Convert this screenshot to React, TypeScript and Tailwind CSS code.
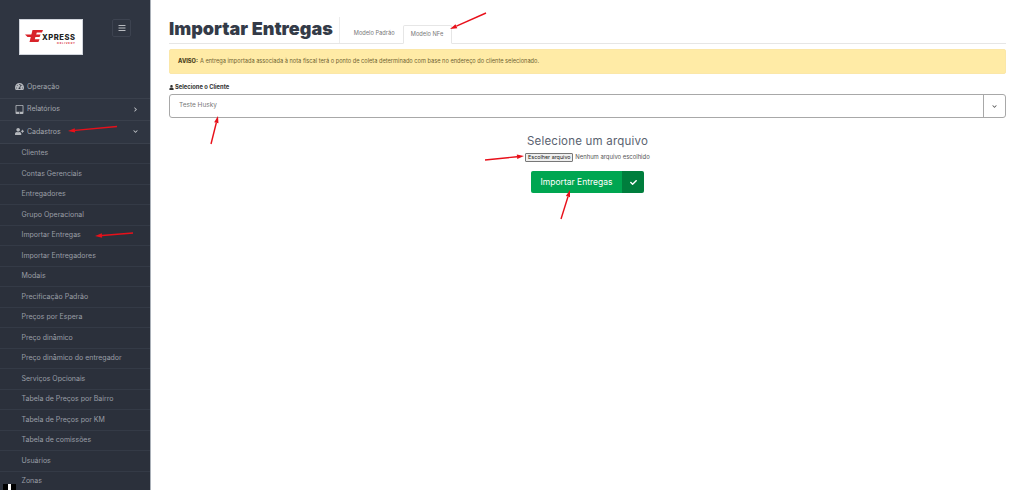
import React from 'react'
import { FaBars, FaCheck, FaChevronDown, FaChevronRight, FaTabletAlt, FaTachometerAlt, FaUser, FaUserPlus } from 'react-icons/fa'

const subItems = [
  'Clientes',
  'Contas Gerenciais',
  'Entregadores',
  'Grupo Operacional',
  'Importar Entregas',
  'Importar Entregadores',
  'Modais',
  'Precificação Padrão',
  'Preços por Espera',
  'Preço dinâmico',
  'Preço dinâmico do entregador',
  'Serviços Opcionais',
  'Tabela de Preços por Bairro',
  'Tabela de Preços por KM',
  'Tabela de comissões',
  'Usuários',
  'Zonas',
]

const arrows = [
  { x1: 486, y1: 13, x2: 450, y2: 29 },
  { x1: 211, y1: 144, x2: 218, y2: 116 },
  { x1: 485, y1: 160, x2: 524, y2: 156 },
  { x1: 561, y1: 219, x2: 570, y2: 190 },
  { x1: 117, y1: 126.5, x2: 68, y2: 131 },
  { x1: 133, y1: 233, x2: 95, y2: 236 },
]

function Arrow({ x1, y1, x2, y2 }: { x1: number; y1: number; x2: number; y2: number }) {
  const a = Math.atan2(y2 - y1, x2 - x1)
  const px = Math.cos(a + Math.PI / 2) * 2.2
  const py = Math.sin(a + Math.PI / 2) * 2.2
  const bx = x2 - Math.cos(a) * 7
  const by = y2 - Math.sin(a) * 7
  return (
    <g>
      <line x1={x1} y1={y1} x2={bx} y2={by} stroke="#e8101a" strokeWidth="1.4" />
      <polygon points={`${x2},${y2} ${bx + px},${by + py} ${bx - px},${by - py}`} fill="#e8101a" />
    </g>
  )
}

function Logo() {
  return (
    <div className="w-16 h-9 bg-white border border-gray-300 flex items-center justify-center">
      <svg width="52" height="16" viewBox="0 0 52 16">
        <path d="M0 5.5 H7.5 L6.5 8 H2.5 Z" fill="#d8232a" />
        <path d="M7.5 1 H18 L17 3.6 H11.8 L11.2 5.6 H15.6 L14.6 8 H10.4 L9.8 10.2 H14.6 L13.4 13 H4.5 Z" fill="#d8232a" />
        <text x="17" y="11" fontSize="7.6" fontWeight="800" fontFamily="Inter, sans-serif" fill="#222" textLength="33">XPRESS</text>
        <text x="32" y="14.6" fontSize="2.6" fontWeight="700" fontFamily="Inter, sans-serif" fill="#d8232a" textLength="18">DELIVERY</text>
      </svg>
    </div>
  )
}

function TopItem({ icon, label, chevron }: { icon: React.ReactNode; label: string; chevron?: React.ReactNode }) {
  return (
    <div className="h-[22.6px] shrink-0 flex items-center pl-3 pr-3 border-b border-[#3a404c] text-[7px] text-[#a3a7ae]">
      <span className="w-[14px] flex justify-center text-[#b5b8bd]">{icon}</span>
      <span className="ml-[1px] flex-1">{label}</span>
      {chevron}
    </div>
  )
}

export default function App() {
  return (
    <div className="relative w-[1024px] h-[490px] overflow-hidden flex bg-white font-['Inter',sans-serif]">
      <aside className="w-[151px] shrink-0 h-full bg-[#2f3541] border-r border-[#aab0b8] flex flex-col overflow-hidden">
        <div className="h-[76px] shrink-0 flex items-start pt-[19px] pl-[19px]">
          <Logo />
          <div className="ml-[29px] w-[19px] h-[18px] border border-[#3d4350] rounded-[2px] flex items-center justify-center text-[#b8bbc0]">
            <FaBars size={8} />
          </div>
        </div>
        <TopItem icon={<FaTachometerAlt size={9} />} label="Operação" />
        <TopItem
          icon={<FaTabletAlt size={9} />}
          label="Relatórios"
          chevron={<FaChevronRight size={5} className="text-[#c5c8cc]" />}
        />
        <TopItem
          icon={<FaUserPlus size={9} />}
          label="Cadastros"
          chevron={<FaChevronDown size={5} className="text-[#c5c8cc]" />}
        />
        <div className="bg-[#2b303b] shrink-0">
          {subItems.map(item => (
            <div
              key={item}
              className="h-[20.5px] flex items-center pl-[21.5px] border-b border-[#343a46] text-[7px] text-[#9a9ea6] whitespace-nowrap"
            >
              {item}
            </div>
          ))}
        </div>
      </aside>

      <main className="flex-1 pl-[18px] pr-[18px] pt-[17px] min-w-0">
        <div className="h-[27px] flex items-end border-b border-[#e6e6e6]">
          <h1 className="h-[26px] pr-[6px] border-r border-[#ececec] text-[#343b48] text-[18px] leading-[24px] font-black whitespace-nowrap">
            Importar Entregas
          </h1>
          <div className="h-[19px] ml-[2px] pl-[12px] pr-[8px] flex items-center text-[5.7px] text-[#777] whitespace-nowrap">Modelo Padrão</div>
          <div className="h-[19px] -mb-px w-[49px] flex items-center justify-center bg-white border border-[#e6e6e6] border-b-white rounded-t-[2px] text-[5.7px] text-[#777] whitespace-nowrap">
            Modelo NFe
          </div>
        </div>

        <div className="mt-[5px] h-[25px] bg-[#ffeba6] border border-[#fbe7a8] rounded-[2px] flex items-center pl-[8px] text-[5.67px] text-[#6f6432] whitespace-nowrap">
          <strong className="mr-[2px] font-extrabold text-[#4c4420]">AVISO:</strong>
          A entrega importada associada à nota fiscal terá o ponto de coleta determinado com base no endereço do cliente selecionado.
        </div>

        <label className="mt-[9px] flex items-center gap-[1px] text-[5.8px] leading-[8px] font-bold text-[#333]">
          <FaUser size={5} />
          Selecione o Cliente
        </label>
        <div className="mt-[3px] h-[24px] flex border border-[#a8a8a8] rounded-[3px] bg-white">
          <div className="flex-1 flex items-center pl-[9px] text-[6.5px] text-[#777]">Teste Husky</div>
          <div className="w-[22px] border-l border-[#a8a8a8] flex items-center justify-center text-[#555]">
            <FaChevronDown size={5} />
          </div>
        </div>

        <div className="mt-[15px] flex flex-col items-center">
          <div className="text-[11.5px] leading-[16px] text-[#5a6270] tracking-[0.2px]">Selecione um arquivo</div>
          <div className="mt-[3px] h-[10px] flex items-center text-[5.9px] text-[#555]">
            <span className="h-[9px] w-[48px] flex items-center justify-center bg-[#efefef] border border-[#777] rounded-[1px] text-[5.4px] text-[#222] whitespace-nowrap">
              Escolher arquivo
            </span>
            <span className="ml-[2px] whitespace-nowrap">Nenhum arquivo escolhido</span>
          </div>
          <div className="mt-[9px] w-[113px] h-[22px] flex rounded-[2px] overflow-hidden text-white">
            <div className="flex-1 bg-[#00a651] flex items-center justify-center text-[8.5px]">Importar Entregas</div>
            <div className="w-[22px] bg-[#007e3d] flex items-center justify-center">
              <FaCheck size={7} />
            </div>
          </div>
        </div>
      </main>

      <div className="absolute left-[3px] bottom-0 w-[13px] h-[6px] bg-black flex justify-center">
        <span className="w-[3px] h-[6px] bg-white" />
      </div>

      <svg className="absolute inset-0 pointer-events-none" width="1024" height="490">
        {arrows.map((arrow, i) => (
          <Arrow key={i} {...arrow} />
        ))}
      </svg>
    </div>
  )
}
